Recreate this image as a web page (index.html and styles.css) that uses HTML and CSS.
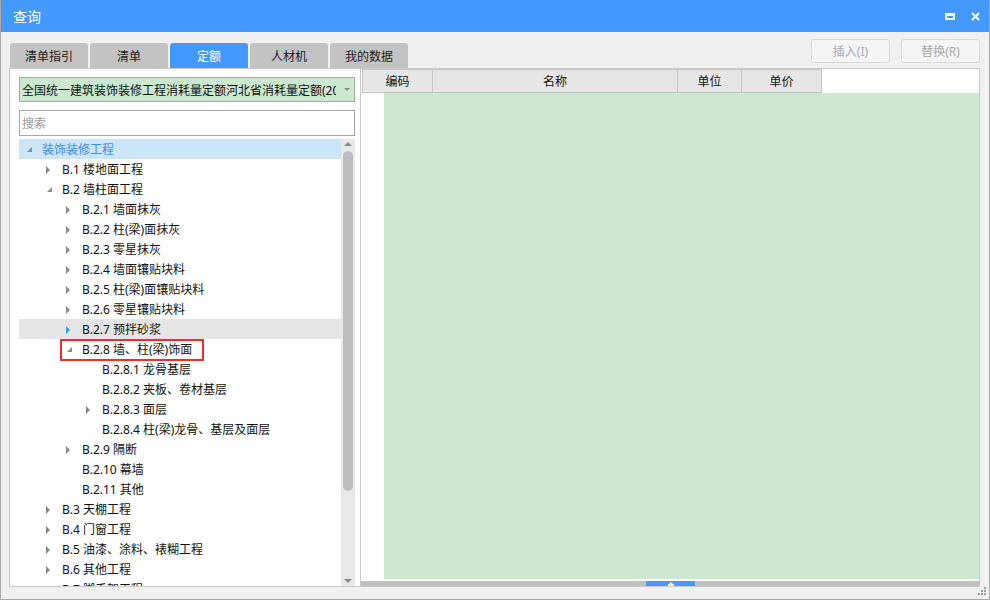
FILE: index.html
```html
<!DOCTYPE html>
<html lang="zh-CN">
<head>
<meta charset="utf-8">
<title>查询</title>
<link rel="stylesheet" href="styles.css">
</head>
<body>
<div class="window">
  <div class="titlebar">
    <span class="title">查询</span>
    <div class="title-actions">
      <svg class="ic-max" width="10" height="7" viewBox="0 0 10 7"><path fill="#fff" fill-rule="evenodd" d="M0 0h10v7H0z M2 3v2h6V3z"/></svg>
      <svg class="ic-close" width="9" height="9" viewBox="0 0 9 9"><path d="M1 1L8 8M8 1L1 8" stroke="#fff" stroke-width="2" fill="none"/></svg>
    </div>
  </div>
  <div class="toolbar">
    <div class="tabs">
      <div class="tab">清单指引</div>
      <div class="tab">清单</div>
      <div class="tab active">定额</div>
      <div class="tab">人材机</div>
      <div class="tab">我的数据</div>
    </div>
    <div class="actions">
      <button class="btn" disabled>插入(I)</button>
      <button class="btn" disabled>替换(R)</button>
    </div>
  </div>
  <div class="main">
    <div class="left">
      <div class="select">
        <span class="select-text">全国统一建筑装饰装修工程消耗量定额河北省消耗量定额(2012)</span>
        <span class="caret"></span>
      </div>
      <div class="search">搜索</div>
      <div class="tree">
        <div class="tree-list">
          <div class="row selected lv0"><span class="twisty"><i class="arrow-d"></i></span><span class="label">装饰装修工程</span></div>
          <div class="row lv1"><span class="twisty"><i class="arrow-r"></i></span><span class="label">B.1 楼地面工程</span></div>
          <div class="row lv1"><span class="twisty"><i class="arrow-d"></i></span><span class="label">B.2 墙柱面工程</span></div>
          <div class="row lv2"><span class="twisty"><i class="arrow-r"></i></span><span class="label">B.2.1 墙面抹灰</span></div>
          <div class="row lv2"><span class="twisty"><i class="arrow-r"></i></span><span class="label">B.2.2 柱(梁)面抹灰</span></div>
          <div class="row lv2"><span class="twisty"><i class="arrow-r"></i></span><span class="label">B.2.3 零星抹灰</span></div>
          <div class="row lv2"><span class="twisty"><i class="arrow-r"></i></span><span class="label">B.2.4 墙面镶贴块料</span></div>
          <div class="row lv2"><span class="twisty"><i class="arrow-r"></i></span><span class="label">B.2.5 柱(梁)面镶贴块料</span></div>
          <div class="row lv2"><span class="twisty"><i class="arrow-r"></i></span><span class="label">B.2.6 零星镶贴块料</span></div>
          <div class="row lv2 hover"><span class="twisty"><i class="arrow-r"></i></span><span class="label">B.2.7 预拌砂浆</span></div>
          <div class="row lv2"><span class="twisty"><i class="arrow-d"></i></span><span class="label">B.2.8 墙、柱(梁)饰面</span><span class="mark"></span></div>
          <div class="row lv3"><span class="twisty"></span><span class="label">B.2.8.1 龙骨基层</span></div>
          <div class="row lv3"><span class="twisty"></span><span class="label">B.2.8.2 夹板、卷材基层</span></div>
          <div class="row lv3"><span class="twisty"><i class="arrow-r"></i></span><span class="label">B.2.8.3 面层</span></div>
          <div class="row lv3"><span class="twisty"></span><span class="label">B.2.8.4 柱(梁)龙骨、基层及面层</span></div>
          <div class="row lv2"><span class="twisty"><i class="arrow-r"></i></span><span class="label">B.2.9 隔断</span></div>
          <div class="row lv2"><span class="twisty"></span><span class="label">B.2.10 幕墙</span></div>
          <div class="row lv2"><span class="twisty"></span><span class="label">B.2.11 其他</span></div>
          <div class="row lv1"><span class="twisty"><i class="arrow-r"></i></span><span class="label">B.3 天棚工程</span></div>
          <div class="row lv1"><span class="twisty"><i class="arrow-r"></i></span><span class="label">B.4 门窗工程</span></div>
          <div class="row lv1"><span class="twisty"><i class="arrow-r"></i></span><span class="label">B.5 油漆、涂料、裱糊工程</span></div>
          <div class="row lv1"><span class="twisty"><i class="arrow-r"></i></span><span class="label">B.6 其他工程</span></div>
          <div class="row lv1"><span class="twisty"><i class="arrow-r"></i></span><span class="label">B.7 脚手架工程</span></div>
        </div>
        <div class="vscroll">
          <i class="sc-up"></i>
          <div class="sc-thumb"></div>
          <i class="sc-down"></i>
        </div>
      </div>
    </div>
    <div class="right">
      <div class="grid-head">
        <div class="hcell c-code">编码</div>
        <div class="hcell c-name">名称</div>
        <div class="hcell c-unit">单位</div>
        <div class="hcell c-price">单价</div>
      </div>
      <div class="grid-body">
        <div class="row-head"></div>
        <div class="grid-fill"></div>
      </div>
      <div class="hscroll">
        <div class="hthumb"><svg width="6" height="4" viewBox="0 0 6 4"><path fill="#fff" d="M3 0L5 2H1z M0 2h6v2H0z"/></svg></div>
      </div>
    </div>
  </div>
  <div class="footer">
    <svg width="8" height="8" viewBox="0 0 8 8"><g fill="#a0a0a0"><rect x="6" y="0" width="2" height="2"/><rect x="3" y="3" width="2" height="2"/><rect x="6" y="3" width="2" height="2"/><rect x="0" y="6" width="2" height="2"/><rect x="3" y="6" width="2" height="2"/><rect x="6" y="6" width="2" height="2"/></g></svg>
  </div>
</div>
</body>
</html>
```
FILE: styles.css
```css
html, body {
  margin: 0;
  padding: 0;
}
body {
  font-family: "Noto Sans", "Noto Sans CJK SC", sans-serif;
  font-size: 12px;
  color: #111;
  background: #f0f0f0;
}
.window {
  width: 990px;
  height: 600px;
  box-sizing: border-box;
  border: 1px solid #a9a9a9;
  border-top: 0;
  background: #f0f0f0;
  display: flex;
  flex-direction: column;
}
.titlebar {
  height: 32px;
  flex: none;
  background: #4499ff;
  color: #fff;
  display: flex;
  align-items: center;
  padding: 0 9px 0 12px;
  font-size: 14px;
}
.title {
  line-height: 32px;
  padding-top: 2px;
}
.title-actions {
  margin-left: auto;
  display: flex;
  align-items: center;
  gap: 16px;
}
.ic-max, .ic-close {
  display: block;
}
.toolbar {
  height: 36px;
  flex: none;
  display: flex;
  padding: 0 9px 0 9px;
}
.tabs {
  display: flex;
  align-self: flex-end;
}
.tab {
  width: 78px;
  height: 25px;
  margin-right: 2px;
  background: #c3c3c3;
  border-radius: 3px 3px 0 0;
  text-align: center;
  line-height: 27px;
  color: #1a1a1a;
}
.tab.active {
  background: #4499ff;
  color: #fff;
}
.actions {
  margin-left: auto;
  margin-top: 7px;
  display: flex;
  gap: 11px;
  align-self: flex-start;
}
.btn {
  width: 79px;
  height: 24px;
  padding: 0;
  border: 1px solid #dadada;
  border-radius: 3px;
  background: #f5f5f5;
  color: #a9a9a9;
  font-family: inherit;
  font-size: 12px;
}
.main {
  flex: 1;
  min-height: 0;
  display: flex;
  margin: 0 9px 0 8px;
  border: 1px solid #c9c9c9;
  background: #fff;
}
.left {
  width: 351px;
  flex: none;
  box-sizing: border-box;
  border-right: 1px solid #c9c9c9;
  padding: 8px 5px 0 9px;
  display: flex;
  flex-direction: column;
  min-height: 0;
}
.select {
  height: 25px;
  flex: none;
  box-sizing: border-box;
  border: 1px solid #a6a6a6;
  background: #cce8cf;
  display: flex;
  align-items: center;
  padding-left: 2px;
}
.select-text {
  flex: 1;
  overflow: hidden;
  white-space: nowrap;
  line-height: 23px;
  padding-top: 1px;
}
.caret {
  width: 0;
  height: 0;
  border-top: 3px solid #888;
  border-left: 3px solid transparent;
  border-right: 3px solid transparent;
  margin: 0 4px 0 8px;
}
.search {
  margin-top: 8px;
  height: 26px;
  flex: none;
  box-sizing: border-box;
  border: 1px solid #a6a6a6;
  background: #fff;
  padding: 1px 0 0 2px;
  line-height: 24px;
  color: #9a9a9a;
}
.tree {
  margin-top: 3px;
  flex: 1;
  min-height: 0;
  display: flex;
  overflow: hidden;
}
.tree-list {
  flex: 1;
  overflow: hidden;
}
.row {
  position: relative;
  height: 20px;
  display: flex;
  align-items: center;
  white-space: nowrap;
  line-height: 20px;
}
.label {
  padding-top: 2px;
}
.row.lv1 { padding-left: 20px; }
.row.lv2 { padding-left: 40px; }
.row.lv3 { padding-left: 60px; }
.row.selected {
  background: #cde5f9;
  color: #3a8ee6;
}
.row.hover {
  background: #e5e5e5;
}
.twisty {
  width: 23px;
  height: 20px;
  flex: none;
  display: flex;
  align-items: center;
}
.arrow-r {
  width: 0;
  height: 0;
  margin-left: 7px;
  margin-top: 1px;
  border-left: 4px solid #8a8a8a;
  border-top: 4px solid transparent;
  border-bottom: 4px solid transparent;
}
.row.hover .arrow-r {
  border-left-color: #3399ff;
}
.arrow-d {
  width: 0;
  height: 0;
  margin-left: 8px;
  margin-top: 1px;
  border-bottom: 5px solid #8a8a8a;
  border-left: 5px solid transparent;
}
.mark {
  position: absolute;
  left: 41px;
  top: 0;
  width: 144px;
  height: 22px;
  box-sizing: border-box;
  border: 2px solid #e8312f;
}
.vscroll {
  width: 14px;
  flex: none;
  background: #e8e8e8;
  display: flex;
  flex-direction: column;
  align-items: center;
}
.sc-up {
  width: 0;
  height: 0;
  margin-top: 3px;
  border-bottom: 4px solid #8a8a8a;
  border-left: 4px solid transparent;
  border-right: 4px solid transparent;
}
.sc-thumb {
  width: 10px;
  height: 340px;
  margin-top: 5px;
  border-radius: 5px;
  background: #bdbdbd;
}
.sc-down {
  width: 0;
  height: 0;
  margin-top: auto;
  margin-bottom: 3px;
  border-top: 4px solid #8a8a8a;
  border-left: 4px solid transparent;
  border-right: 4px solid transparent;
}
.right {
  flex: 1;
  min-width: 0;
  display: flex;
  flex-direction: column;
}
.grid-head {
  display: flex;
  height: 24px;
  flex: none;
  margin-left: 1px;
}
.hcell {
  box-sizing: border-box;
  height: 24px;
  border-top: 1px solid #c6c6c6;
  border-bottom: 1px solid #c6c6c6;
  border-right: 1px solid #c6c6c6;
  background: #e6e6e6;
  text-align: center;
  line-height: 24px;
  color: #111;
}
.c-code { width: 71px; border-left: 1px solid #c6c6c6; }
.c-name { width: 245px; }
.c-unit { width: 64px; }
.c-price { width: 80px; }
.grid-body {
  flex: 1;
  min-height: 0;
  display: flex;
  margin-bottom: 2px;
}
.row-head {
  width: 23px;
  flex: none;
  background: #fff;
}
.grid-fill {
  flex: 1;
  background: #cce8cf;
}
.hscroll {
  height: 5px;
  flex: none;
  background: #c1c1c1;
  display: flex;
}
.hthumb {
  margin-left: 285px;
  width: 49px;
  background: #4499ff;
  display: flex;
  align-items: center;
  justify-content: center;
}
.hthumb svg {
  display: block;
}
.footer {
  height: 12px;
  flex: none;
  display: flex;
  justify-content: flex-end;
  align-items: flex-start;
  padding-right: 3px;
}
.footer svg {
  display: block;
}
```
